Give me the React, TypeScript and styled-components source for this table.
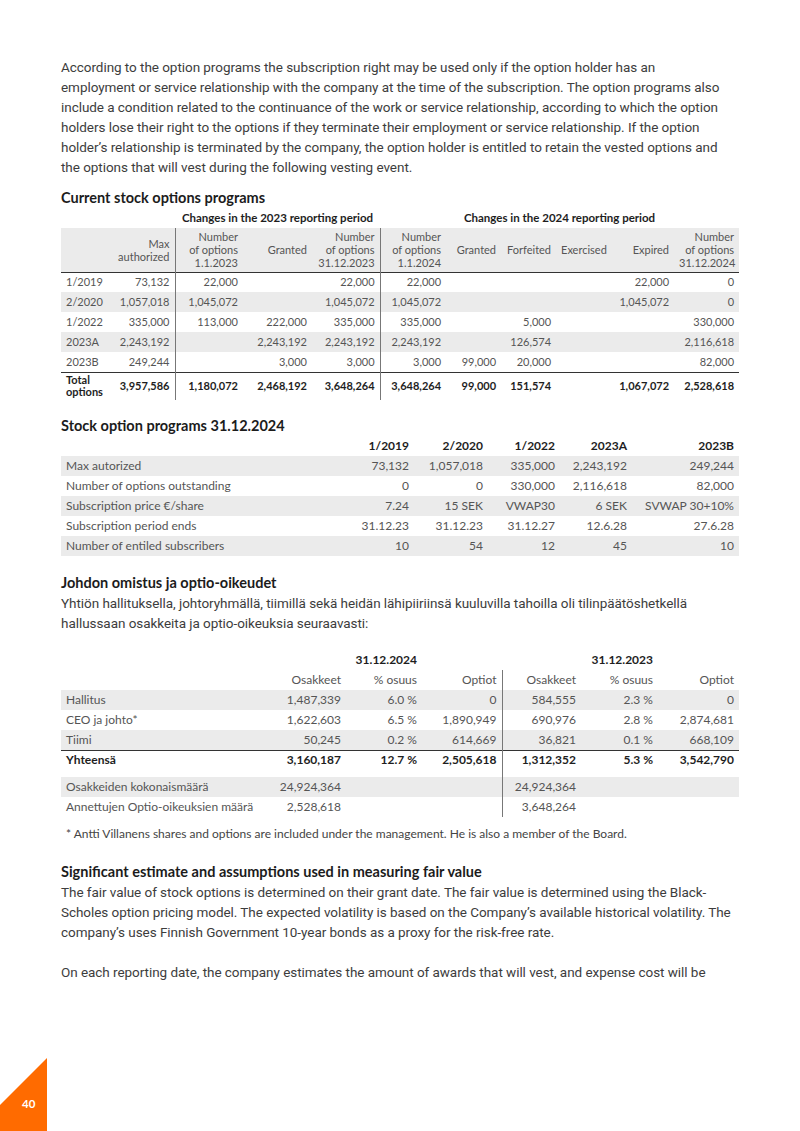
import React from "react";
import styled, { createGlobalStyle } from "styled-components";

const Global = createGlobalStyle`
  html, body { margin: 0; padding: 0; background: #ffffff; }
  body { font-family: Lato, "Noto Sans", sans-serif; color: #333333; }
  #root { width: 800px; }
`;

const Page = styled.div`
  width: 800px;
  height: 1131px;
  box-sizing: border-box;
  display: flex;
  flex-direction: column;
  overflow: hidden;
`;

const Content = styled.main`
  padding: 57px 61px 0;
  display: flex;
  flex-direction: column;
`;

const Para = styled.p<{ $mt?: number }>`
  margin: ${(p) => p.$mt ?? 0}px 0 0;
  max-width: 671px;
  font-family: Roboto, "Liberation Sans", sans-serif;
  font-size: 13.5px;
  line-height: 20px;
  letter-spacing: -0.05px;
  color: #3d3d3d;
`;

const Heading = styled.h3<{ $mt: number }>`
  margin: ${(p) => p.$mt}px 0 0;
  font-family: Lato, "Noto Sans", sans-serif;
  font-weight: 700;
  font-size: 14.5px;
  line-height: 20px;
  color: #1c1c1c;
`;

const Table = styled.table<{ $size: number; $mt?: number }>`
  width: 678px;
  margin-top: ${(p) => p.$mt ?? 0}px;
  border-collapse: collapse;
  table-layout: fixed;
  font-family: Lato, "Noto Sans", sans-serif;
  font-size: ${(p) => p.$size}px;
  color: #555555;
`;

const Row = styled.tr<{ $shade?: boolean; $h?: number; $rule?: boolean }>`
  height: ${(p) => p.$h ?? 20}px;
  background: ${(p) => (p.$shade ? "#ebebeb" : "transparent")};
  border-bottom: ${(p) => (p.$rule ? "1px solid #333333" : "none")};
`;

const Cell = styled.td<{
  $align?: "left" | "right" | "center";
  $divider?: boolean;
  $bold?: boolean;
  $lh?: number;
  $size?: number;
}>`
  padding: 0 5px;
  text-align: ${(p) => p.$align ?? "right"};
  border-right: ${(p) => (p.$divider ? "1px solid #777777" : "none")};
  font-weight: ${(p) => (p.$bold ? 700 : 400)};
  font-size: ${(p) => (p.$size ? `${p.$size}px` : "inherit")};
  color: ${(p) => (p.$bold ? "#1e1e1e" : "inherit")};
  white-space: nowrap;
  vertical-align: middle;
  line-height: ${(p) => p.$lh ?? 14}px;
  overflow: visible;
`;

const Footnote = styled.p`
  margin: 7px 0 0;
  padding-left: 5px;
  font-family: Lato, "Noto Sans", sans-serif;
  font-size: 12px;
  line-height: 20px;
  color: #444444;
`;

const Footer = styled.footer`
  margin-top: auto;
  display: flex;
  align-items: flex-end;
`;

const PageTab = styled.div`
  position: relative;
  width: 47px;
  height: 73px;
  svg { display: block; }
`;

const PageNumber = styled.span`
  position: absolute;
  left: 22px;
  top: 38px;
  font-family: Lato, "Noto Sans", sans-serif;
  font-weight: 700;
  font-size: 11.5px;
  line-height: 16px;
  color: #ffffff;
`;

const t1Cols = [52, 62, 68, 69, 68, 66, 55, 55, 53, 65, 65];
const t1Dividers = [1, 4];
const t1Rows: string[][] = [
  ["1/2019", "73,132", "22,000", "", "22,000", "22,000", "", "", "", "22,000", "0"],
  ["2/2020", "1,057,018", "1,045,072", "", "1,045,072", "1,045,072", "", "", "", "1,045,072", "0"],
  ["1/2022", "335,000", "113,000", "222,000", "335,000", "335,000", "", "5,000", "", "", "330,000"],
  ["2023A", "2,243,192", "", "2,243,192", "2,243,192", "2,243,192", "", "126,574", "", "", "2,116,618"],
  ["2023B", "249,244", "", "3,000", "3,000", "3,000", "99,000", "20,000", "", "", "82,000"],
];
const t1Total = ["", "3,957,586", "1,180,072", "2,468,192", "3,648,264", "3,648,264", "99,000", "151,574", "", "1,067,072", "2,528,618"];
const t1Head: React.ReactNode[] = [
  "",
  <>Max<br />authorized</>,
  <>Number<br />of options<br />1.1.2023</>,
  "Granted",
  <>Number<br />of options<br />31.12.2023</>,
  <>Number<br />of options<br />1.1.2024</>,
  "Granted",
  "Forfeited",
  "Exercised",
  "Expired",
  <>Number<br />of options<br />31.12.2024</>,
];

const t2Cols = [285, 68, 74, 72, 72, 107];
const t2Head = ["", "1/2019", "2/2020", "1/2022", "2023A", "2023B"];
const t2Rows: string[][] = [
  ["Max autorized", "73,132", "1,057,018", "335,000", "2,243,192", "249,244"],
  ["Number of options outstanding", "0", "0", "330,000", "2,116,618", "82,000"],
  ["Subscription price €/share", "7.24", "15 SEK", "VWAP30", "6 SEK", "SVWAP 30+10%"],
  ["Subscription period ends", "31.12.23", "31.12.23", "31.12.27", "12.6.28", "27.6.28"],
  ["Number of entiled subscribers", "10", "54", "12", "45", "10"],
];

const t3Cols = [205, 80, 76, 80, 79, 77, 81];
const t3Rows: string[][] = [
  ["Hallitus", "1,487,339", "6.0 %", "0", "584,555", "2.3 %", "0"],
  ["CEO ja johto*", "1,622,603", "6.5 %", "1,890,949", "690,976", "2.8 %", "2,874,681"],
  ["Tiimi", "50,245", "0.2 %", "614,669", "36,821", "0.1 %", "668,109"],
];
const t3Total = ["Yhteensä", "3,160,187", "12.7 %", "2,505,618", "1,312,352", "5.3 %", "3,542,790"];
const t3Extra: string[][] = [
  ["Osakkeiden kokonaismäärä", "24,924,364", "", "", "24,924,364", "", ""],
  ["Annettujen Optio-oikeuksien määrä", "2,528,618", "", "", "3,648,264", "", ""],
];

const Cols = ({ widths }: { widths: number[] }) => (
  <colgroup>
    {widths.map((w, i) => (
      <col key={i} style={{ width: w }} />
    ))}
  </colgroup>
);

export default function App() {
  return (
    <>
      <Global />
      <Page>
        <Content>
          <Para>
            According to the option programs the subscription right may be used only if the option holder has an
            employment or service relationship with the company at the time of the subscription. The option programs also
            include a condition related to the continuance of the work or service relationship, according to which the option
            holders lose their right to the options if they terminate their employment or service relationship. If the option
            holder’s relationship is terminated by the company, the option holder is entitled to retain the vested options and
            the options that will vest during the following vesting event.
          </Para>

          <Heading $mt={11}>Current stock options programs</Heading>
          <Table $size={11}>
            <Cols widths={t1Cols} />
            <tbody>
              <Row $h={20}>
                <Cell />
                <Cell />
                <Cell colSpan={3} $align="center" $bold $size={11.5}>
                  Changes in the 2023 reporting period
                </Cell>
                <Cell colSpan={6} $align="center" $bold $size={11.5}>
                  Changes in the 2024 reporting period
                </Cell>
              </Row>
              <Row $h={44} $shade $rule>
                {t1Head.map((h, i) => (
                  <Cell key={i} $divider={t1Dividers.includes(i)} $lh={13}>
                    {h}
                  </Cell>
                ))}
              </Row>
              {t1Rows.map((r, ri) => (
                <Row key={ri} $shade={ri % 2 === 1} $rule={ri === t1Rows.length - 1}>
                  {r.map((c, ci) => (
                    <Cell key={ci} $align={ci === 0 ? "left" : "right"} $divider={t1Dividers.includes(ci)}>
                      {c}
                    </Cell>
                  ))}
                </Row>
              ))}
              <Row $h={28}>
                {t1Total.map((c, ci) => (
                  <Cell key={ci} $bold $align={ci === 0 ? "left" : "right"} $divider={t1Dividers.includes(ci)} $lh={12}>
                    {ci === 0 ? (
                      <>
                        Total
                        <br />
                        options
                      </>
                    ) : (
                      c
                    )}
                  </Cell>
                ))}
              </Row>
            </tbody>
          </Table>

          <Heading $mt={16}>Stock option programs 31.12.2024</Heading>
          <Table $size={12}>
            <Cols widths={t2Cols} />
            <tbody>
              <Row>
                {t2Head.map((h, i) => (
                  <Cell key={i} $bold>
                    {h}
                  </Cell>
                ))}
              </Row>
              {t2Rows.map((r, ri) => (
                <Row key={ri} $shade={ri % 2 === 0}>
                  {r.map((c, ci) => (
                    <Cell key={ci} $align={ci === 0 ? "left" : "right"}>
                      {c}
                    </Cell>
                  ))}
                </Row>
              ))}
            </tbody>
          </Table>

          <Heading $mt={17}>Johdon omistus ja optio-oikeudet</Heading>
          <Para>
            Yhtiön hallituksella, johtoryhmällä, tiimillä sekä heidän lähipiiriinsä kuuluvilla tahoilla oli tilinpäätöshetkellä
            hallussaan osakkeita ja optio-oikeuksia seuraavasti:
          </Para>

          <Table $size={12} $mt={17}>
            <Cols widths={t3Cols} />
            <tbody>
              <Row>
                <Cell />
                <Cell />
                <Cell $bold>31.12.2024</Cell>
                <Cell />
                <Cell />
                <Cell $bold>31.12.2023</Cell>
                <Cell />
              </Row>
              <Row>
                {["", "Osakkeet", "% osuus", "Optiot", "Osakkeet", "% osuus", "Optiot"].map((h, i) => (
                  <Cell key={i} $divider={i === 3}>
                    {h}
                  </Cell>
                ))}
              </Row>
              {t3Rows.map((r, ri) => (
                <Row key={ri} $shade={ri % 2 === 0} $rule={ri === t3Rows.length - 1}>
                  {r.map((c, ci) => (
                    <Cell key={ci} $align={ci === 0 ? "left" : "right"} $divider={ci === 3}>
                      {c}
                    </Cell>
                  ))}
                </Row>
              ))}
              <Row>
                {t3Total.map((c, ci) => (
                  <Cell key={ci} $bold $align={ci === 0 ? "left" : "right"} $divider={ci === 3}>
                    {c}
                  </Cell>
                ))}
              </Row>
              <Row $h={7}>
                {t3Cols.map((_, ci) => (
                  <Cell key={ci} $divider={ci === 3} />
                ))}
              </Row>
              {t3Extra.map((r, ri) => (
                <Row key={ri} $shade={ri === 0}>
                  {r.map((c, ci) => (
                    <Cell key={ci} $align={ci === 0 ? "left" : "right"} $divider={ci === 3}>
                      {c}
                    </Cell>
                  ))}
                </Row>
              ))}
            </tbody>
          </Table>
          <Footnote>* Antti Villanens shares and options are included under the management. He is also a member of the Board.</Footnote>

          <Heading $mt={18}>Significant estimate and assumptions used in measuring fair value</Heading>
          <Para>
            The fair value of stock options is determined on their grant date. The fair value is determined using the Black-
            Scholes option pricing model. The expected volatility is based on the Company’s available historical volatility. The
            company’s uses Finnish Government 10-year bonds as a proxy for the risk-free rate.
          </Para>
          <Para $mt={20}>
            On each reporting date, the company estimates the amount of awards that will vest, and expense cost will be
          </Para>
        </Content>
        <Footer>
          <PageTab>
            <svg width="47" height="73" viewBox="0 0 47 73" aria-hidden="true">
              <polygon points="0,47 47,0 47,73 0,73" fill="#ff6b00" />
            </svg>
            <PageNumber>40</PageNumber>
          </PageTab>
        </Footer>
      </Page>
    </>
  );
}
